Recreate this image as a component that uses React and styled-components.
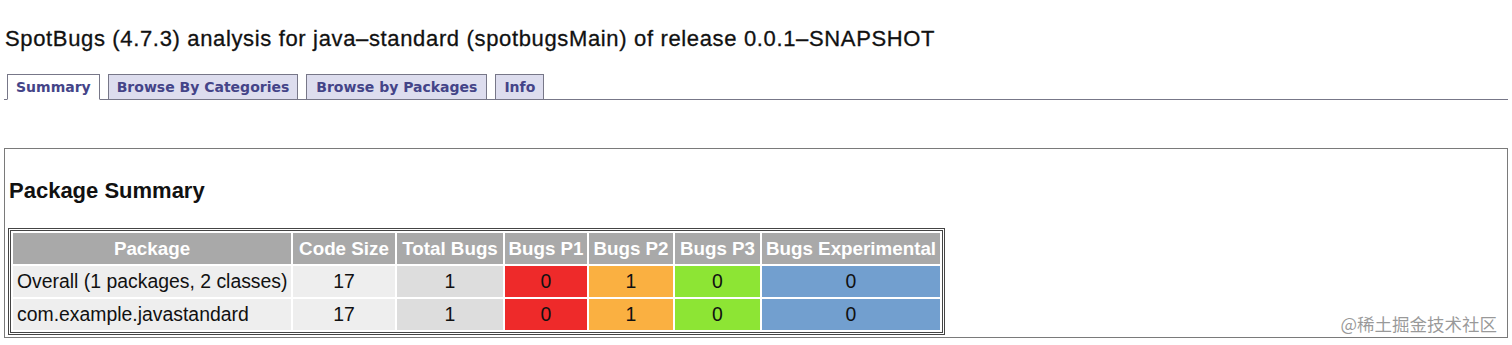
import React from "react"
import styled, { createGlobalStyle } from "styled-components"

const GlobalStyle = createGlobalStyle`
  html, body {
    margin: 0;
    padding: 0;
    background: #ffffff;
    color: #000000;
    font-family: "Liberation Sans", Arial, sans-serif;
  }
`

const Page = styled.div`
  position: relative;
  padding: 0 4px;
  height: 345px;
  overflow: hidden;
`

const Title = styled.h1`
  margin: 26px 0 0 1px;
  font-size: 22px;
  line-height: 25px;
  font-weight: normal;
  letter-spacing: 0.65px;
  color: #111;
  -webkit-text-stroke: 0.3px #111;
`

const NavList = styled.ul`
  display: flex;
  align-items: flex-end;
  gap: 8px;
  margin: 23px 0 0;
  padding: 0 0 0 3px;
  list-style: none;
  border-bottom: 1px solid #778;
  font: bold 14px "DejaVu Sans", Verdana, sans-serif;
`

const Tab = styled.li`
  margin-bottom: -1px;
  padding: 0 ${props => props.$pad || 8}px;
  height: 24px;
  line-height: 25px;
  border: 1px solid #778;
  border-bottom-color: ${props => (props.$current ? "#ffffff" : "#778")};
  background: ${props => (props.$current ? "#ffffff" : "#dde")};
  color: #448;
  white-space: nowrap;
`

const Panel = styled.section`
  margin-top: 48px;
  padding: 0 4px 2px;
  border: 1px solid #7a7a7a;
`

const Heading = styled.h2`
  margin: 29px 0 0;
  font-size: 22px;
  line-height: 26px;
  font-weight: bold;
  color: #111;
`

const SummaryTable = styled.table`
  width: 937px;
  margin-top: 24px;
  margin-left: -1px;
  border: 3px double #444;
  border-spacing: 2px;
  table-layout: fixed;
  font-size: 19.4px;
`

const HeadCell = styled.th`
  height: 31px;
  padding: 0;
  background: #a9a9a9;
  color: #ffffff;
  font-size: 18.8px;
  font-weight: bold;
  text-align: center;
  white-space: nowrap;
  overflow: hidden;
`

const Cell = styled.td`
  height: 31px;
  padding: 0 4px;
  background: ${props => props.$bg || "#eeeeee"};
  color: #111;
  text-align: ${props => (props.$left ? "left" : "center")};
  white-space: nowrap;
`

const Watermark = styled.div`
  position: absolute;
  right: 15px;
  bottom: 9px;
  font-family: "Noto Sans CJK SC", sans-serif;
  font-size: 17.5px;
  color: rgba(120, 120, 120, 0.75);
`

const columns = [
  { label: "Package", width: 278 },
  { label: "Code Size", width: 102 },
  { label: "Total Bugs", width: 106 },
  { label: "Bugs P1", width: 82 },
  { label: "Bugs P2", width: 84 },
  { label: "Bugs P3", width: 85 },
  { label: "Bugs Experimental", width: 178 },
]

const rows = [
  { name: "Overall (1 packages, 2 classes)", size: 17, total: 1, p1: 0, p2: 1, p3: 0, exp: 0 },
  { name: "com.example.javastandard", size: 17, total: 1, p1: 0, p2: 1, p3: 0, exp: 0 },
]

const tabs = [
  { label: "Summary", pad: 8 },
  { label: "Browse By Categories", pad: 8 },
  { label: "Browse by Packages", pad: 9 },
  { label: "Info", pad: 8 },
]

export default function App() {
  return (
    <>
      <GlobalStyle />
      <Page>
        <Title>SpotBugs (4.7.3) analysis for java–standard (spotbugsMain) of release 0.0.1–SNAPSHOT</Title>

        <NavList>
          {tabs.map((t, i) => (
            <Tab key={t.label} $current={i === 0} $pad={t.pad}>{t.label}</Tab>
          ))}
        </NavList>

        <Panel>
          <Heading>Package Summary</Heading>
          <SummaryTable>
            <colgroup>
              {columns.map(c => (
                <col key={c.label} style={{ width: c.width }} />
              ))}
            </colgroup>
            <thead>
              <tr>
                {columns.map(c => (
                  <HeadCell key={c.label}>{c.label}</HeadCell>
                ))}
              </tr>
            </thead>
            <tbody>
              {rows.map(r => (
                <tr key={r.name}>
                  <Cell $left>{r.name}</Cell>
                  <Cell>{r.size}</Cell>
                  <Cell $bg="#dddddd">{r.total}</Cell>
                  <Cell $bg="#ee2a2a">{r.p1}</Cell>
                  <Cell $bg="#fab041">{r.p2}</Cell>
                  <Cell $bg="#8de534">{r.p3}</Cell>
                  <Cell $bg="#729fcf">{r.exp}</Cell>
                </tr>
              ))}
            </tbody>
          </SummaryTable>
        </Panel>

        <Watermark>@稀土掘金技术社区</Watermark>
      </Page>
    </>
  )
}
